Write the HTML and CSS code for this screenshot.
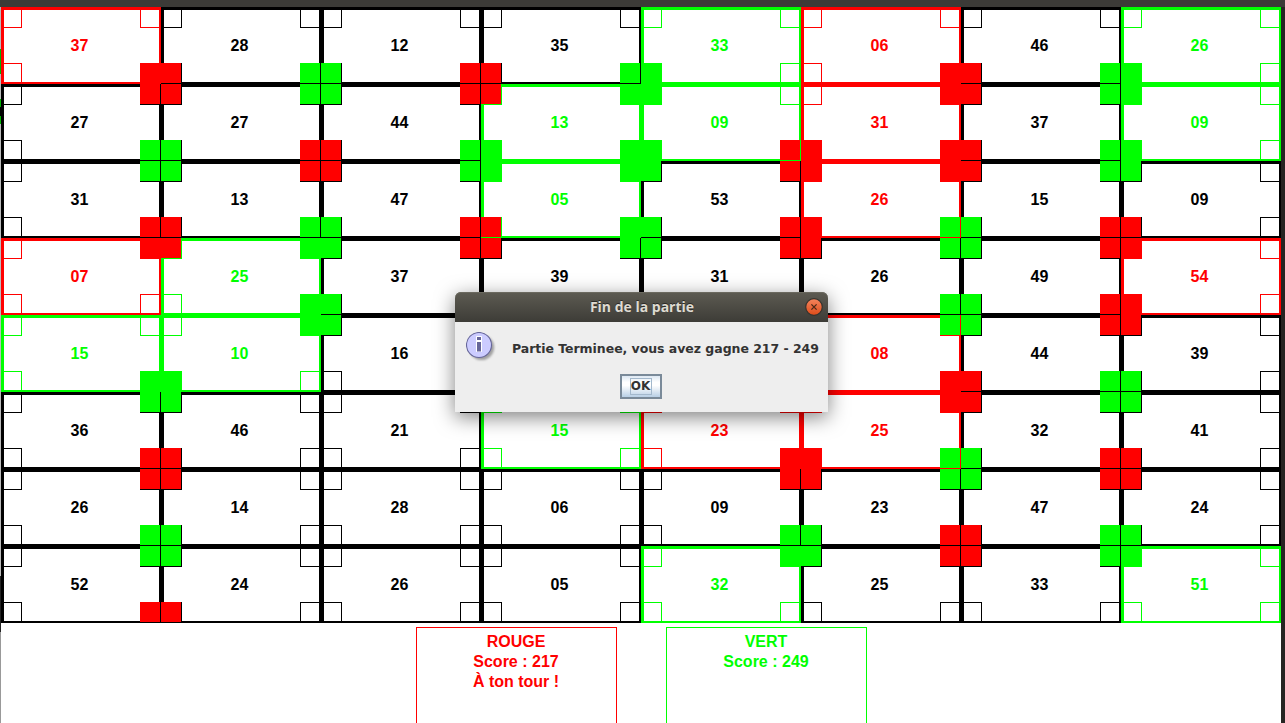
FILE: index.html
```html
<!DOCTYPE html>
<html lang="fr">
<head>
<meta charset="utf-8">
<title>Fin de la partie</title>
<link rel="stylesheet" href="styles.css">
</head>
<body>
<div class="frame-top"></div>
<div class="window">
<div class="edge-left"></div>
<main class="content">
<section class="board">
<div class="cell red br-red">37</div><div class="cell bl-red br-green">28</div><div class="cell bl-green br-red">12</div><div class="cell bl-red br-green">35</div><div class="cell green bl-green">33</div><div class="cell red br-red">06</div><div class="cell bl-red br-green">46</div><div class="cell green bl-green">26</div>
<div class="cell tr-red br-green">27</div><div class="cell tl-red tr-green bl-green br-red">27</div><div class="cell tl-green tr-red bl-red br-green">44</div><div class="cell green tl-red tr-green bl-green br-green">13</div><div class="cell green tl-green bl-green br-red">09</div><div class="cell red tr-red bl-red br-red">31</div><div class="cell tl-red tr-green bl-red br-green">37</div><div class="cell green tl-green bl-green">09</div>
<div class="cell tr-green br-red">31</div><div class="cell tl-green tr-red bl-red br-green">13</div><div class="cell tl-red tr-green bl-green br-red">47</div><div class="cell green tl-green tr-green bl-red br-green">05</div><div class="cell tl-green tr-red bl-green br-red">53</div><div class="cell red tl-red tr-red bl-red br-green">26</div><div class="cell tl-red tr-green bl-green br-red">15</div><div class="cell tl-green bl-red">09</div>
<div class="cell red tr-red">07</div><div class="cell green tl-red tr-green br-green">25</div><div class="cell tl-green tr-red bl-green">37</div><div class="cell tl-red tr-green">39</div><div class="cell tl-green tr-red">31</div><div class="cell tl-red tr-green br-green">26</div><div class="cell tl-green tr-red bl-green br-red">49</div><div class="cell red tl-red bl-red">54</div>
<div class="cell green br-green">15</div><div class="cell green tr-green bl-green">10</div><div class="cell tl-green">16</div><div class="cell"></div><div class="cell"></div><div class="cell red tr-green br-red">08</div><div class="cell tl-green tr-red bl-red br-green">44</div><div class="cell tl-red bl-green">39</div>
<div class="cell tr-green br-red">36</div><div class="cell tl-green bl-red">46</div><div class="cell">21</div><div class="cell green">15</div><div class="cell red br-red">23</div><div class="cell red tr-red bl-red br-green">25</div><div class="cell tl-red tr-green bl-green br-red">32</div><div class="cell tl-green bl-red">41</div>
<div class="cell tr-red br-green">26</div><div class="cell tl-red bl-green">14</div><div class="cell">28</div><div class="cell">06</div><div class="cell tr-red br-green">09</div><div class="cell tl-red tr-green bl-green br-red">23</div><div class="cell tl-green tr-red bl-red br-green">47</div><div class="cell tl-red bl-green">24</div>
<div class="cell tr-green br-red">52</div><div class="cell tl-green bl-red">24</div><div class="cell">26</div><div class="cell">05</div><div class="cell green tr-green">32</div><div class="cell tl-green tr-red">25</div><div class="cell tl-red tr-green">33</div><div class="cell green tl-green">51</div>
</section>
<section class="scores">
<div class="score red"><div>ROUGE</div><div>Score : 217</div><div>À ton tour !</div></div>
<div class="score green"><div>VERT</div><div>Score : 249</div></div>
</section>
</main>
<div class="edge-right"></div>
</div>
<div class="dialog" role="dialog">
<header class="titlebar">
<span class="title">Fin de la partie</span>
<svg class="close" width="18" height="18" viewBox="0 0 18 18"><defs><linearGradient id="orb" x2="0" y2="1"><stop offset="0" stop-color="#f4845d"/><stop offset="1" stop-color="#de4c19"/></linearGradient></defs><circle cx="9" cy="9" r="8.3" fill="url(#orb)" stroke="#35332e" stroke-width="1.2"/><path d="M6.4 6.4l5.200 5.200M11.600 6.400l-5.200 5.200" stroke="#4b2818" stroke-width="1.3"/></svg>
</header>
<div class="message">
<svg class="info" width="32" height="32" viewBox="0 0 32 32"><defs><filter id="soft" x="-30%" y="-30%" width="160%" height="160%"><feGaussianBlur stdDeviation="1.2"/></filter></defs><circle cx="15.500" cy="15.500" r="12.600" fill="#777" opacity=".65" filter="url(#soft)"/><circle cx="13" cy="13" r="12.500" fill="#ccf" stroke="#669" stroke-width="1.100"/><path d="M10.500 4.500h5v15h-5v-11h0v-0z" fill="#fff" stroke="#fff"/><path d="M11 5h4v3h-4zM11 10h4v9.500h-4z" fill="#669"/></svg>
<p class="text">Partie Terminee, vous avez gagne 217 - 249</p>
</div>
<div class="actions"><button class="ok"><span>OK</span></button></div>
</div>
</body>
</html>
```
FILE: styles.css
```css
* { box-sizing: border-box; }
body { margin: 0; width: 1285px; height: 723px; overflow: hidden; background: #fff; font: bold 16px/20px "Liberation Sans", Arial, sans-serif; color: #000; }
.frame-top { height: 7px; background: #3c3b37; }
.window { display: flex; height: 716px; }
.edge-left { width: 1px; background: linear-gradient(#bbb 0 42px, #00b400 42px 67px, #bbb 67px 92px, #00b400 92px 100px, #000 100px 109px, #00b400 109px 117px, #bbb 117px 569px, #222 569px 625px, #999 625px); }
.edge-right { width: 4px; background: #262422; }
.content { width: 1280px; overflow: hidden; }
.board { display: grid; grid-template-columns: repeat(8, 160px); grid-auto-rows: 77px; }
.red { color: #f00; }
.green { color: #0f0; }

/* Layers, front to back: owner fills, cell frame, corner interiors, corner outlines. */
.cell {
  --line: linear-gradient(currentColor, currentColor);
  --paper: linear-gradient(#fff, #fff);
  --none: linear-gradient(transparent, transparent);
  padding: 29px 3px 0 0;
  text-align: center;
  background:
    var(--tl, var(--none)) 0 0 / 20px 20px,
    var(--tr, var(--none)) 139px 0 / 20px 20px,
    var(--bl, var(--none)) 0 56px / 20px 20px,
    var(--br, var(--none)) 139px 56px / 20px 20px,
    var(--line) 0 0 / 160px 3px,
    var(--line) 0 75px / 160px 2px,
    var(--line) 0 0 / 3px 77px,
    var(--line) 158px 0 / 2px 77px,
    var(--paper) 1px 1px / 19px 19px,
    var(--paper) 140px 1px / 19px 19px,
    var(--paper) 1px 57px / 19px 19px,
    var(--paper) 140px 57px / 19px 19px,
    var(--line) 0 0 / 21px 21px,
    var(--line) 139px 0 / 21px 21px,
    var(--line) 0 56px / 21px 21px,
    var(--line) 139px 56px / 21px 21px;
  background-repeat: no-repeat;
}
.tl-red { --tl: linear-gradient(#f00, #f00); }
.tr-red { --tr: linear-gradient(#f00, #f00); }
.bl-red { --bl: linear-gradient(#f00, #f00); }
.br-red { --br: linear-gradient(#f00, #f00); }
.tl-green { --tl: linear-gradient(#0f0, #0f0); }
.tr-green { --tr: linear-gradient(#0f0, #0f0); }
.bl-green { --bl: linear-gradient(#0f0, #0f0); }
.br-green { --br: linear-gradient(#0f0, #0f0); }

.scores { display: flex; gap: 49px; padding: 4px 0 0 415px; }
.score { width: 201px; height: 110px; border: 1px solid; padding: 4px 1px 0 0; text-align: center; }

.dialog { position: absolute; left: 455px; top: 292px; width: 373px; height: 120px; border-radius: 6px 6px 0 0; background: #eee; box-shadow: 0 5px 20px rgba(0, 0, 0, .5); }
.titlebar { display: flex; align-items: center; height: 30px; padding: 0 5px 0 28px; border-radius: 6px 6px 0 0; background: linear-gradient(#5d5b52, #3d3c37); box-shadow: inset 0 1px #6b695f; }
.title { flex: 1; padding-right: 4px; text-align: center; font: bold 14px/30px "Open Sans", sans-serif; color: #dfdbd2; text-shadow: 0 -1px #2b2a27; }
.message { display: flex; height: 52px; padding: 10px 0 0 11px; }
.info { flex: none; }
.text { margin: 7px 0 0 14px; font: bold 12.5px/20px "DejaVu Sans", sans-serif; letter-spacing: -.04px; color: #333; white-space: nowrap; }
.actions { display: flex; justify-content: center; padding-right: 2px; }
.ok { width: 42px; height: 25px; padding: 2px 0 0; display: flex; justify-content: center; border: 2px solid #7a8a99; background: linear-gradient(#dde8f3, #fff 30%, #fff 45%, #b8cfe5); font: bold 12px/15px "DejaVu Sans", sans-serif; color: #333; }
.ok span { width: 22px; height: 17px; border: 1px solid #a3b8cc; text-align: center; }
```
